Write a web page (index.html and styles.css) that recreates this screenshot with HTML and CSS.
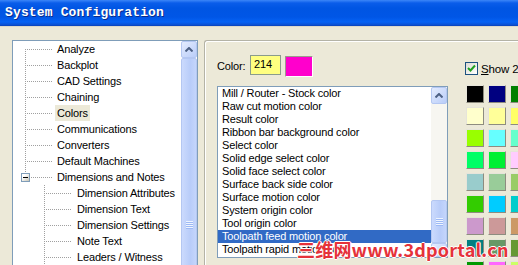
FILE: index.html
```html
<!DOCTYPE html>
<html>
<head>
  <meta charset="UTF-8">
  <title>System Configuration</title>
  <link rel="stylesheet" href="styles.css">
</head>
<body>
  <!-- Barre de titre -->
  <div class="titlebar">System Configuration</div>

  <div class="main">
    <!-- Arbre des rubriques -->
    <div class="tree-box">
      <div class="tree">
        <div class="node"><span class="branch first"></span><span class="label">Analyze</span></div>
        <div class="node"><span class="branch"></span><span class="label">Backplot</span></div>
        <div class="node"><span class="branch"></span><span class="label">CAD Settings</span></div>
        <div class="node"><span class="branch"></span><span class="label">Chaining</span></div>
        <div class="node"><span class="branch"></span><span class="label selected">Colors</span></div>
        <div class="node"><span class="branch"></span><span class="label">Communications</span></div>
        <div class="node"><span class="branch"></span><span class="label">Converters</span></div>
        <div class="node"><span class="branch"></span><span class="label">Default Machines</span></div>
        <div class="node"><span class="branch last"><span class="expander"></span></span><span class="label">Dimensions and Notes</span></div>
        <div class="node child"><span class="branch"></span><span class="label">Dimension Attributes</span></div>
        <div class="node child"><span class="branch"></span><span class="label">Dimension Text</span></div>
        <div class="node child"><span class="branch"></span><span class="label">Dimension Settings</span></div>
        <div class="node child"><span class="branch"></span><span class="label">Note Text</span></div>
        <div class="node child"><span class="branch"></span><span class="label">Leaders / Witness</span></div>
      </div>
      <div class="vscroll">
        <div class="sb-btn"><svg width="8" height="5" viewBox="0 0 8 5"><polyline points="0.5,4.5 4,1 7.5,4.5" fill="none" stroke="#4D6185" stroke-width="2"/></svg></div>
        <div class="sb-thumb"></div>
      </div>
    </div>

    <!-- Réglages des couleurs -->
    <div class="group">
      <div class="color-row">
        <span class="color-label">Color:</span>
        <span class="color-num">214</span>
        <span class="color-preview"></span>
      </div>
      <div class="check-row">
        <span class="checkbox"><svg width="9" height="9" viewBox="0 0 9 9"><polyline points="1,4 3.5,6.5 8,1.5" fill="none" stroke="#21A121" stroke-width="2"/></svg></span>
        <span><u>S</u>how 256 colors</span>
      </div>

      <div class="listbox">
        <div class="items">
          <div class="item">Mill / Router - Stock color</div>
          <div class="item">Raw cut motion color</div>
          <div class="item">Result color</div>
          <div class="item">Ribbon bar background color</div>
          <div class="item">Select color</div>
          <div class="item">Solid edge select color</div>
          <div class="item">Solid face select color</div>
          <div class="item">Surface back side color</div>
          <div class="item">Surface motion color</div>
          <div class="item">System origin color</div>
          <div class="item">Tool origin color</div>
          <div class="item selected">Toolpath feed motion color</div>
          <div class="item">Toolpath rapid motion color</div>
        </div>
        <div class="vscroll list-scroll">
          <div class="sb-btn"><svg width="8" height="5" viewBox="0 0 8 5"><polyline points="0.5,4.5 4,1 7.5,4.5" fill="none" stroke="#4D6185" stroke-width="2"/></svg></div>
          <div class="sb-track"></div>
          <div class="sb-thumb"></div>
          <div class="sb-btn down"><svg width="8" height="5" viewBox="0 0 8 5"><polyline points="0.5,0.5 4,4 7.5,0.5" fill="none" stroke="#4D6185" stroke-width="2"/></svg></div>
        </div>
      </div>

      <div class="palette">
        <span class="swatch" style="background:#000000"></span>
        <span class="swatch" style="background:#000080"></span>
        <span class="swatch" style="background:#008000"></span>
        <span class="swatch" style="background:#FFFFCC"></span>
        <span class="swatch" style="background:#FFFF99"></span>
        <span class="swatch" style="background:#FFFF66"></span>
        <span class="swatch" style="background:#99FF00"></span>
        <span class="swatch" style="background:#66FFFF"></span>
        <span class="swatch" style="background:#66FFCC"></span>
        <span class="swatch" style="background:#00FF66"></span>
        <span class="swatch" style="background:#00F033"></span>
        <span class="swatch" style="background:#FFCCFF"></span>
        <span class="swatch" style="background:#99CCCC"></span>
        <span class="swatch" style="background:#99CC99"></span>
        <span class="swatch" style="background:#99CC66"></span>
        <span class="swatch" style="background:#33CC00"></span>
        <span class="swatch" style="background:#00CCFF"></span>
        <span class="swatch" style="background:#00CCCC"></span>
        <span class="swatch" style="background:#CC99CC"></span>
        <span class="swatch" style="background:#CC9999"></span>
        <span class="swatch" style="background:#CC9966"></span>
        <span class="swatch" style="background:#008080"></span>
        <span class="swatch" style="background:#669966"></span>
        <span class="swatch" style="background:#669933"></span>
        <span class="swatch" style="background:#009900"></span>
        <span class="swatch" style="background:#FF66FF"></span>
        <span class="swatch" style="background:#CCFF66"></span>
      </div>
    </div>
  </div>

  <!-- Filigrane -->
  <div class="watermark">三维网www.3dportal.cn</div>
</body>
</html>
```

FILE: styles.css
```css
/* Fenêtre façon Windows XP */
body {
  margin: 0;
  width: 518px;
  height: 265px;
  overflow: hidden;
  position: relative;
  background-color: #ECE9D8;
  font-family: "Liberation Sans", Arial, sans-serif;
  font-size: 11px;
  letter-spacing: -0.15px;
  color: #000;
}
.titlebar {
  height: 26px;
  line-height: 26px;
  padding-left: 5px;
  border-bottom: 1px solid #DCD9CB;
  background: linear-gradient(#3C86F8 0, #0A5DEA 3px, #0055E3 8px, #0056E6 17px, #0662F4 22px, #0B4FD0 25px, #0A3FB4 26px);
  color: #fff;
  font-family: "Liberation Mono", monospace;
  font-weight: bold;
  font-size: 13px;
  letter-spacing: 0.15px;
  text-shadow: 1px 1px 0 #0A2C8C;
}
.main {
  display: flex;
  gap: 6px;
  padding: 13px 0 0 12px;
}
/* Arbre */
.tree-box {
  flex: none;
  width: 186px;
  height: 352px;
  box-sizing: border-box;
  border: 1px solid #7F9DB9;
  background-color: #fff;
  display: flex;
}
.tree {
  flex: 1;
}
.node {
  display: flex;
  height: 16px;
  padding-left: 12px;
}
.node.child {
  padding-left: 31px;
}
.branch {
  flex: none;
  width: 30px;
  display: flex;
  align-items: center;
  background:
    repeating-linear-gradient(90deg, #A0A0A0 0 1px, transparent 1px 2px) 0 8px / 28px 1px no-repeat,
    repeating-linear-gradient(180deg, #A0A0A0 0 1px, transparent 1px 2px) 0 0 / 1px 100% no-repeat;
}
.branch.first {
  background:
    repeating-linear-gradient(90deg, #A0A0A0 0 1px, transparent 1px 2px) 0 8px / 28px 1px no-repeat,
    repeating-linear-gradient(180deg, #A0A0A0 0 1px, transparent 1px 2px) 0 8px / 1px 8px no-repeat;
}
.branch.last {
  background:
    repeating-linear-gradient(90deg, #A0A0A0 0 1px, transparent 1px 2px) 0 8px / 28px 1px no-repeat,
    repeating-linear-gradient(180deg, #A0A0A0 0 1px, transparent 1px 2px) 0 0 / 1px 8px no-repeat;
}
.node.child .branch {
  width: 31px;
}
.expander {
  width: 9px;
  height: 9px;
  box-sizing: border-box;
  margin-left: -4px;
  border: 1px solid #7F9DB9;
  background:
    linear-gradient(#000, #000) center / 5px 1px no-repeat,
    linear-gradient(135deg, #fff 30%, #C8C4B4);
}
.label {
  padding: 0 2px;
  line-height: 16px;
  white-space: nowrap;
}
.label.selected {
  background-color: #ECE9D8;
}
/* Barres de défilement */
.vscroll {
  flex: none;
  width: 16px;
  display: flex;
  flex-direction: column;
}
.sb-btn {
  flex: none;
  height: 17px;
  box-sizing: border-box;
  border: 1px solid #B4C7F2;
  border-radius: 2px;
  background: linear-gradient(135deg, #E4ECFE, #B9CDF9);
  display: flex;
  align-items: center;
  justify-content: center;
}
.sb-btn.down {
  height: 14px;
  align-items: flex-end;
  padding-bottom: 2px;
}
.sb-thumb {
  flex: 1;
  box-sizing: border-box;
  border: 1px solid #B4C7F2;
  border-radius: 2px;
  background:
    repeating-linear-gradient(#EEF4FE 0 1px, #9DB9F5 1px 2px) center / 7px 8px no-repeat,
    linear-gradient(90deg, #CBDAFD, #B8CCF9 60%, #C4D5FB);
}
.list-scroll {
  background-color: #F7F6F1;
}
.list-scroll .sb-track {
  height: 96px;
}
.list-scroll .sb-thumb {
  flex: none;
  height: 43px;
}
/* Zone de droite */
.group {
  flex: 1;
  display: grid;
  grid-template-columns: 231px auto;
  grid-template-rows: 44px auto;
  column-gap: 17px;
  align-items: start;
  padding-left: 12px;
  border-top: 1px solid #B4B3A6;
  border-left: 1px solid #B4B3A6;
  border-top-left-radius: 3px;
  box-shadow: inset 1px 1px 0 #fff;
}
.color-row {
  display: flex;
  align-items: flex-start;
  margin-top: 14px;
}
.color-label {
  width: 33px;
  margin-top: 5px;
}
.color-num {
  width: 31px;
  height: 20px;
  box-sizing: border-box;
  padding: 2px 3px;
  line-height: 12px;
  border: 1px solid #8A9C8C;
  background-color: #FFFF80;
}
.color-preview {
  width: 28px;
  height: 21px;
  box-sizing: border-box;
  margin: 1px 0 0 4px;
  border: 1px solid;
  border-color: #9C9A8E #fff #fff #9C9A8E;
  background-color: #FF00CC;
}
.check-row {
  display: flex;
  align-items: center;
  gap: 3px;
  margin-top: 21px;
  white-space: nowrap;
  font-size: 11.5px;
}
.checkbox {
  width: 13px;
  height: 13px;
  box-sizing: border-box;
  border: 1px solid #1C5180;
  background: linear-gradient(135deg, #DCDCD5, #fff);
  display: flex;
  align-items: center;
  justify-content: center;
}
.listbox {
  margin-top: 1px;
  height: 172px;
  box-sizing: border-box;
  border: 1px solid #7F9DB9;
  background-color: #fff;
  display: flex;
}
.items {
  flex: 1;
}
.item {
  height: 13px;
  line-height: 13px;
  padding-left: 4px;
  white-space: nowrap;
}
.item.selected {
  background-color: #316AC5;
  color: #fff;
}
.palette {
  display: grid;
  grid-template-columns: repeat(3, 18px);
  grid-auto-rows: 18px;
  gap: 4px;
  margin-left: 1px;
}
.swatch {
  box-sizing: border-box;
  border: 1px solid;
  border-color: #E6E4DA #8E8C80 #8E8C80 #E6E4DA;
}
/* Filigrane du site */
.watermark {
  position: absolute;
  left: 297px;
  top: 240px;
  line-height: 18px;
  font-family: "Noto Sans CJK SC", sans-serif;
  font-weight: bold;
  font-size: 18px;
  letter-spacing: 0.2px;
  color: #E5323A;
  white-space: nowrap;
  text-shadow: 1px 0 0 #fff, -1px 0 0 #fff, 0 1px 0 #fff, 0 -1px 0 #fff;
}
```
